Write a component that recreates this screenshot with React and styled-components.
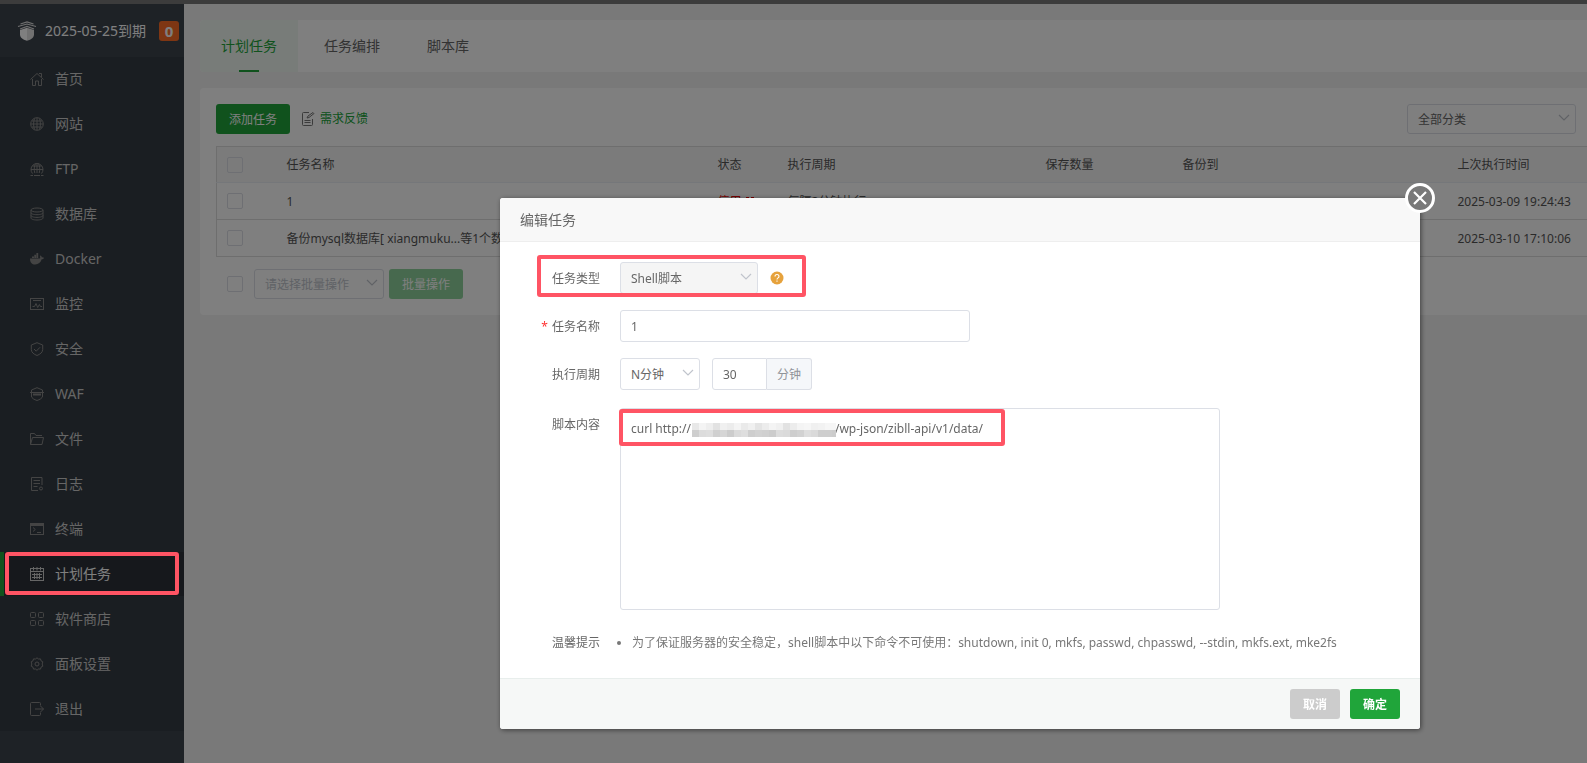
import styled, { createGlobalStyle, css } from "styled-components";

const GlobalStyle = createGlobalStyle`
  * {
    box-sizing: border-box;
  }

  body {
    margin: 0;
    background-color: #f2f2f2;
    color: #666;
    font-family: "Noto Sans", "Noto Sans CJK SC", sans-serif;
    font-size: 12px;
    line-height: 20px;
    overflow: hidden;
  }

  button,
  input,
  select,
  textarea {
    margin: 0;
    font: inherit;
    color: inherit;
  }
`;

const StyledPage = styled.div`
  position: relative;
  display: flex;
  min-height: 100vh;
  border-top: 4px solid #787878;
`;

const StyledSidebar = styled.aside`
  flex: none;
  width: 184px;
  background-color: #3c444d;
`;

const StyledSidebarHeader = styled.header`
  display: flex;
  align-items: center;
  gap: 8px;
  height: 53px;
  padding: 0 5px 0 17px;
  color: #fff;
  font-size: 14px;
  white-space: nowrap;
`;

const StyledExpiry = styled.span`
  flex: 1;
`;

const StyledBadge = styled.span`
  width: 20px;
  border-radius: 3px;
  background-color: #fc6d26;
  font-size: 15px;
  font-weight: bold;
  text-align: center;
`;

const StyledMenu = styled.ul`
  display: flex;
  flex-direction: column;
  gap: 1px;
  margin: 0;
  padding: 0;
  background-color: #353d44;
  list-style: none;
`;

const StyledMenuLink = styled.a`
  display: flex;
  align-items: center;
  gap: 11px;
  height: 44px;
  padding-left: 26px;
  border-left: 4px solid transparent;
  color: #ccc;
  font-size: 14px;
  text-decoration: none;

  svg {
    color: #888;
  }

  ${({ $active }) =>
    $active &&
    css`
      border-left-color: #20a53a;
      background-color: #2c3138;
      color: #fff;

      svg {
        color: #ccc;
      }
    `}
`;

const StyledContent = styled.main`
  flex: 1;
  min-width: 0;
  padding: 16px 0 0 16px;
`;

const StyledTabs = styled.nav`
  display: flex;
  gap: 5px;
  height: 52px;
  margin-bottom: 16px;
  border-radius: 4px 0 0 4px;
  background-color: #fff;
`;

const StyledTab = styled.a`
  display: flex;
  flex-direction: column;
  align-items: center;
  padding: 16px 21px 0;
  border-radius: 4px 0 0 4px;
  background-color: ${({ $active }) => ($active ? "#f0f9f2" : "transparent")};
  color: ${({ $active }) => ($active ? "#20a53a" : "#666")};
  font-size: 14px;
  text-decoration: none;

  &::after {
    content: "";
    width: 20px;
    height: 2px;
    margin-top: auto;
    background-color: ${({ $active }) => ($active ? "#20a53a" : "transparent")};
  }
`;

const StyledPanel = styled.section`
  padding: 16px 0 16px 16px;
  border-radius: 4px 0 0 4px;
  background-color: #fff;
  overflow: hidden;
`;

const StyledToolbar = styled.div`
  display: flex;
  align-items: center;
  gap: 12px;
  margin-bottom: 12px;
  padding-right: 11px;
`;

const StyledButton = styled.button`
  min-width: 50px;
  height: 30px;
  padding: 2px 12px 0;
  border: 0;
  border-radius: 3px;
  background-color: ${({ $muted }) => ($muted ? "#ccc" : "#20a53a")};
  color: #fff;
  font-weight: ${({ $bold }) => ($bold ? "bold" : "normal")};

  &:disabled {
    background-color: #8fd29c;
  }
`;

const StyledTaskButton = styled(StyledButton)`
  min-width: 74px;
`;

const StyledFeedbackLink = styled.a`
  display: flex;
  flex: 1;
  align-items: center;
  gap: 5px;
  color: #20a53a;
  line-height: 22px;
  text-decoration: none;

  svg {
    color: #777;
  }
`;

const StyledSelectBox = styled.div`
  position: relative;
  width: ${({ $width }) => $width}px;

  svg {
    position: absolute;
    top: 50%;
    right: 6px;
    margin-top: -7px;
    color: #c0c4cc;
    pointer-events: none;
  }
`;

const StyledSelect = styled.select`
  display: block;
  width: 100%;
  height: ${({ $tall }) => ($tall ? 32 : 30)}px;
  padding: 2px 10px 0;
  border: 1px solid #dcdfe6;
  border-radius: 3px;
  background-color: ${({ $filled }) => ($filled ? "#f5f5f5" : "#fff")};
  appearance: none;
  color: ${({ $faded }) => ($faded ? "#c0c4cc" : "#666")};
  opacity: 1;
`;

const StyledTable = styled.table`
  width: 1480px;
  border: 1px solid #ddd;
  border-collapse: collapse;
  table-layout: fixed;
  color: #555;

  th,
  td {
    height: 37px;
    padding: 0 10px;
    border-bottom: 1px solid #ddd;
    font-weight: normal;
    text-align: left;
    white-space: nowrap;
  }

  td:not(:first-child) {
    padding-top: 2px;
  }

  th {
    height: 36px;
    border-bottom-color: #ebeef5;
    background-color: #f6f6f6;
  }
`;

const StyledCheckbox = styled.input`
  display: block;
  flex: none;
  width: 16px;
  height: 16px;
  border: 1px solid #dcdfe6;
  border-radius: 2px;
  appearance: none;
`;

const StyledStatus = styled.span`
  display: flex;
  align-items: center;
  gap: 4px;
  color: #e00;
`;

const StyledBatchBar = styled.div`
  display: flex;
  align-items: center;
  gap: 5px;
  margin-top: 12px;
  padding-left: 11px;

  ${StyledCheckbox} {
    margin-right: 6px;
  }
`;

const StyledOverlay = styled.div`
  position: fixed;
  inset: 0;
  display: flex;
  align-items: flex-start;
  padding: 198px 0 0 500px;
  background-color: rgba(0, 0, 0, 0.5);
`;

const StyledDialog = styled.section`
  position: relative;
  flex: none;
  width: 920px;
  border-radius: 3px;
  background-color: #fff;
  box-shadow: 1px 1px 5px rgba(0, 0, 0, 0.5);
`;

const StyledDialogHeader = styled.header`
  height: 44px;
  padding: 12px 20px;
  border-bottom: 1px solid #eee;
  border-radius: 3px 3px 0 0;
  background-color: #f8f8f8;
`;

const StyledDialogTitle = styled.h2`
  margin: 0;
  font-size: 14px;
  font-weight: normal;
  line-height: 20px;
`;

const StyledCloseButton = styled.button`
  position: absolute;
  top: -15px;
  right: -15px;
  display: flex;
  align-items: center;
  justify-content: center;
  width: 30px;
  height: 30px;
  padding: 0;
  border: 3px solid #fff;
  border-radius: 50%;
  background-color: #797979;
  color: #fff;
`;

const StyledForm = styled.form`
  display: flex;
  flex-direction: column;
  gap: 14px;
  padding: 20px 20px 18px;
`;

const StyledRow = styled.div`
  position: relative;
  display: flex;
  align-items: flex-start;
  margin-top: ${({ $spaced }) => ($spaced ? 2 : 0)}px;
`;

const StyledLabel = styled.label`
  flex: none;
  width: 100px;
  padding-right: 20px;
  line-height: 34px;
  text-align: right;
`;

const StyledRequired = styled.span`
  margin-right: 4px;
  color: #f33;
`;

const StyledField = styled.div`
  display: flex;
  align-items: center;
  gap: 12px;
`;

const StyledInput = styled.input`
  width: ${({ $width }) => $width}px;
  height: 32px;
  padding: 0 10px;
  border: 1px solid #dcdfe6;
  border-radius: 3px;
  background-color: #fff;
`;

const StyledInputGroup = styled.div`
  display: flex;

  ${StyledInput} {
    border-radius: 3px 0 0 3px;
  }
`;

const StyledUnit = styled.span`
  width: 45px;
  height: 32px;
  border: 1px solid #dcdfe6;
  border-left: 0;
  border-radius: 0 3px 3px 0;
  background-color: #f5f7fa;
  color: #909399;
  line-height: 32px;
  text-align: center;
`;

const StyledTextarea = styled.textarea`
  display: block;
  width: 600px;
  height: 202px;
  padding: 10px;
  border: 1px solid #dcdfe6;
  border-radius: 3px;
  resize: none;
`;

const StyledMosaic = styled.svg`
  position: absolute;
  top: 15px;
  left: 172px;
`;

const StyledTips = styled.ul`
  margin: 0;
  padding-left: 12px;
  color: #777;
  line-height: 34px;
`;

const StyledDialogFooter = styled.footer`
  display: flex;
  justify-content: flex-end;
  gap: 10px;
  padding: 10px 20px;
  border-top: 1px solid #e8eeec;
  border-radius: 0 0 3px 3px;
  background-color: #f6f8f7;
`;

// red marker frames drawn over the page
const StyledMarker = styled.div`
  position: absolute;
  top: ${({ $top }) => $top}px;
  left: ${({ $left }) => $left}px;
  width: ${({ $width }) => $width}px;
  height: ${({ $height }) => $height}px;
  border: 4px solid #ff5464;
  border-radius: 3px;
  pointer-events: none;
`;

const icons = {
  home: <path d="M.5 7.500 7 1.500l6.500 6M2.500 7v6.500h3V9h3v4.500h3V7M9 1.500h2.500V5" />,
  site: (
    <>
      <circle cx="7" cy="7" r="6.300" />
      <path d="M7 1v12M1 7h12M2 4h10M2 10h10M4.500 1.500C3.300 5 3.300 9 4.500 12.500M9.500 1.500c1.200 3.500 1.200 7.500 0 11" />
    </>
  ),
  ftp: (
    <>
      <path d="M2.500 11.500a6 6 0 1 1 9 0" />
      <path d="M7 1v10M1 7.500h12M2.500 4h9M4.800 11C3.800 7.500 4.200 4 5.500 1.500M9.200 11c1-3.500.6-7-.7-9.500M.5 13.500H3M4 13.500h6M11 13.500h2.500" />
    </>
  ),
  database: (
    <>
      <ellipse cx="7" cy="3" rx="6" ry="2" />
      <path d="M1 3v8c0 1.200 2.700 2 6 2s6-.8 6-2V3M1 5.700c0 1.200 2.700 2 6 2s6-.8 6-2M1 8.400c0 1.200 2.700 2 6 2s6-.8 6-2" />
    </>
  ),
  docker: (
    <path
      fill="currentColor"
      stroke="none"
      d="M2 4.500h2V6H2zM4.300 2.800h1.800V6H4.300zM6.400 1h1.800v5H6.400zM0 6.400h10c.3-.8.200-1.700-.2-2.300l.8-.7c.7.400 1.100 1 1.200 1.800.8-.1 1.600.100 2.200.6-.4 1-1.200 1.500-2.300 1.500-1 3.300-3.300 5.200-6.500 5.200C2 12.500 0 10.500 0 6.400z"
    />
  ),
  monitor: (
    <>
      <rect x="0.5" y="1.500" width="13" height="11" />
      <path d="M3 3.500h8M2.500 9.500h2L6 6.500l1.700 4 1.700-3 1 2h1.600" />
    </>
  ),
  shield: <path d="M7 .7 12.700 3v4.500c0 3-2.700 4.800-5.700 6-3-1.200-5.700-3-5.700-6V3zM4 7l2.200 2.200L10 5.300" />,
  waf: (
    <>
      <path d="M1.500 5V3L7 .7 12.500 3v2M1.300 9c.5 2.500 3 3.500 5.700 4.500 2.700-1 5.200-2 5.700-4.500M0 5.500h14M1.500 5v4M12.500 5v4" />
      <path d="M3 7.500h8" strokeWidth="2" />
    </>
  ),
  folder: <path d="M.5 12.500V1.500h4l1.500 2h6M.5 12.500h11.500l1.500-7h-11L.5 12.500" />,
  log: (
    <>
      <path d="M12 8V.5H1.500v13H8M3.500 3.500H10M3.500 6.500H10M3.500 9.500h4" />
      <circle cx="11" cy="11.500" r="1.500" />
    </>
  ),
  terminal: (
    <>
      <rect x="0.5" y="1.500" width="13" height="11" />
      <path d="M.5 3h13" strokeWidth="2" />
      <path d="m3 5.500 2.300 2L3 9.500M7 10.500h4" />
    </>
  ),
  calendar: (
    <>
      <rect x="0.5" y="1.500" width="13" height="12" />
      <path d="M0 4.500h14M3.500 0v3.500M7 0v3.500M10.500 0v3.500M2 7.500h10M2 10.500h10M4.500 6v6M7 6v6M9.500 6v6" />
    </>
  ),
  store: (
    <>
      <rect x="0.500" y="0.500" width="5" height="5" rx="1" />
      <rect x="8.500" y="0.500" width="5" height="5" rx="1" />
      <rect x="0.500" y="8.500" width="5" height="5" rx="1" />
      <rect x="8.500" y="8.500" width="5" height="5" rx="1" />
    </>
  ),
  settings: (
    <>
      <path d="m5.500 2 1.500-1.200L8.500 2l2-.1.500 1.900 1.800 1-.6 2.200.6 2.200-1.800 1-.5 1.900-2-.1L7 13.200 5.500 12l-2 .1-.5-1.900-1.800-1L1.800 7l-.6-2.200 1.800-1 .5-1.900z" />
      <circle cx="7" cy="7" r="2" />
    </>
  ),
  exit: <path d="M10.500 3.500v-2q0-1-1-1H1.500q-1 0-1 1v11q0 1 1 1h8q1 0 1-1v-2M5 7h8.500M10.500 4 13.500 7l-3 3" />,
};

const menuItems = [
  { icon: "home", name: "首页" },
  { icon: "site", name: "网站" },
  { icon: "ftp", name: "FTP" },
  { icon: "database", name: "数据库" },
  { icon: "docker", name: "Docker" },
  { icon: "monitor", name: "监控" },
  { icon: "shield", name: "安全" },
  { icon: "waf", name: "WAF" },
  { icon: "folder", name: "文件" },
  { icon: "log", name: "日志" },
  { icon: "terminal", name: "终端" },
  { icon: "calendar", name: "计划任务", active: true },
  { icon: "store", name: "软件商店" },
  { icon: "settings", name: "面板设置" },
  { icon: "exit", name: "退出" },
];

const tasks = [
  { name: "1", period: "每隔2分钟执行", last: "2025-03-09 19:24:43" },
  {
    name: "备份mysql数据库[ xiangmuku...等1个数据库 ]",
    period: "每天执行",
    last: "2025-03-10 17:10:06",
  },
];

function MenuIcon({ name }) {
  return (
    <svg width="14" height="14" viewBox="0 0 14 14" fill="none" stroke="currentColor">
      {icons[name]}
    </svg>
  );
}

function Logo() {
  return (
    <svg width="20" height="20" viewBox="0 0 20 20">
      <path
        d="M3.500 3 10 1l6.500 2M1 5.500 10 3l9 2.500M3 8l7-2.500L17 8"
        fill="none"
        stroke="#ddd"
        strokeWidth="1.200"
      />
      <path d="M3 9l7-2.300v13.100C5.500 18.500 3 16.500 3 13.500z" fill="#fff" />
      <path d="M17 9l-7-2.300v13.100c4.500-1.300 7-3.300 7-6.300z" fill="#e2e2e2" />
    </svg>
  );
}

function Select({ id, label, width, children, ...props }) {
  return (
    <StyledSelectBox $width={width}>
      <StyledSelect id={id} aria-label={label} {...props}>
        <option>{children}</option>
      </StyledSelect>
      <svg width="12" height="12" viewBox="0 0 12 12" fill="none" stroke="currentColor">
        <path d="m1 3 5 5 5-5" strokeWidth="1.200" />
      </svg>
    </StyledSelectBox>
  );
}

// pixelated strip that hides the host name
function Mosaic() {
  const top = [232, 244, 238, 226, 240, 236, 244, 234, 240, 228, 236, 244, 240, 226, 236, 244, 246, 240, 242, 246, 246];
  const bottom = [206, 220, 222, 208, 214, 204, 218, 222, 206, 210, 208, 204, 220, 218, 206, 210, 222, 218, 206, 206, 204];

  return (
    <StyledMosaic width="144" height="14" aria-hidden="true">
      {top.map((v, i) => (
        <rect key={i} x={i * 7} width="7" height="7" fill={`rgb(${v},${v},${v})`} />
      ))}
      {bottom.map((v, i) => (
        <rect key={i} x={i * 7} y="7" width="7" height="7" fill={`rgb(${v},${v},${v})`} />
      ))}
    </StyledMosaic>
  );
}

function Sidebar() {
  return (
    <StyledSidebar>
      <StyledSidebarHeader>
        <Logo />
        <StyledExpiry>2025-05-25到期</StyledExpiry>
        <StyledBadge>0</StyledBadge>
      </StyledSidebarHeader>
      <StyledMenu>
        {menuItems.map((item) => (
          <li key={item.name}>
            <StyledMenuLink href="#" $active={item.active}>
              <MenuIcon name={item.icon} />
              {item.name}
            </StyledMenuLink>
          </li>
        ))}
      </StyledMenu>
    </StyledSidebar>
  );
}

function TaskTable() {
  return (
    <StyledTable>
      <colgroup>
        <col style={{ width: 60 }} />
        <col style={{ width: 431 }} />
        <col style={{ width: 70 }} />
        <col style={{ width: 258 }} />
        <col style={{ width: 137 }} />
        <col style={{ width: 275 }} />
        <col />
      </colgroup>
      <thead>
        <tr>
          <th>
            <StyledCheckbox type="checkbox" aria-label="全选" />
          </th>
          <th>任务名称</th>
          <th>状态</th>
          <th>执行周期</th>
          <th>保存数量</th>
          <th>备份到</th>
          <th>上次执行时间</th>
        </tr>
      </thead>
      <tbody>
        {tasks.map((task) => (
          <tr key={task.name}>
            <td>
              <StyledCheckbox type="checkbox" aria-label={task.name} />
            </td>
            <td>{task.name}</td>
            <td>
              <StyledStatus>
                停用
                <svg width="8" height="10" viewBox="0 0 8 10" fill="currentColor">
                  <path d="M0 0h3v10H0zM5 0h3v10H5z" />
                </svg>
              </StyledStatus>
            </td>
            <td>{task.period}</td>
            <td />
            <td />
            <td>{task.last}</td>
          </tr>
        ))}
      </tbody>
    </StyledTable>
  );
}

function EditDialog() {
  return (
    <StyledDialog role="dialog" aria-labelledby="dialog-title">
      <StyledDialogHeader>
        <StyledDialogTitle id="dialog-title">编辑任务</StyledDialogTitle>
      </StyledDialogHeader>
      <StyledCloseButton type="button" aria-label="关闭">
        <svg width="14" height="14" viewBox="0 0 14 14" stroke="currentColor" strokeWidth="2.200">
          <path d="m1 1 12 12M13 1 1 13" />
        </svg>
      </StyledCloseButton>
      <StyledForm>
        <StyledRow>
          <StyledLabel htmlFor="task-type">任务类型</StyledLabel>
          <StyledField>
            <Select id="task-type" width={138} $tall $filled>
              Shell脚本
            </Select>
            <svg width="14" height="14" viewBox="0 0 14 14" aria-hidden="true">
              <circle cx="7" cy="7" r="6.500" fill="#e6a23c" />
              <path
                d="M5 5.500c0-2.600 4-2.600 4 0C9 7 7 6.800 7 8.500M7 9.500v1.200"
                fill="none"
                stroke="#fff"
                strokeWidth="1.100"
              />
            </svg>
          </StyledField>
          <StyledMarker $top={-7} $left={17} $width={269} $height={42} />
        </StyledRow>
        <StyledRow>
          <StyledLabel htmlFor="task-name">
            <StyledRequired>*</StyledRequired>
            任务名称
          </StyledLabel>
          <StyledInput id="task-name" $width={350} defaultValue="1" />
        </StyledRow>
        <StyledRow>
          <StyledLabel htmlFor="task-period">执行周期</StyledLabel>
          <StyledField>
            <Select id="task-period" width={80} $tall>
              N分钟
            </Select>
            <StyledInputGroup>
              <StyledInput $width={55} defaultValue="30" aria-label="分钟" />
              <StyledUnit>分钟</StyledUnit>
            </StyledInputGroup>
          </StyledField>
        </StyledRow>
        <StyledRow $spaced>
          <StyledLabel htmlFor="task-script">脚本内容</StyledLabel>
          <StyledTextarea
            id="task-script"
            defaultValue={"curl http://" + "\u2003".repeat(12) + "/wp-json/zibll-api/v1/data/"}
          />
          <Mosaic />
          <StyledMarker $top={1} $left={99} $width={386} $height={37} />
        </StyledRow>
        <StyledRow $spaced>
          <StyledLabel as="span">温馨提示</StyledLabel>
          <StyledTips>
            <li>
              为了保证服务器的安全稳定，shell脚本中以下命令不可使用：shutdown, init 0, mkfs, passwd, chpasswd, --stdin,
              mkfs.ext, mke2fs
            </li>
          </StyledTips>
        </StyledRow>
      </StyledForm>
      <StyledDialogFooter>
        <StyledButton type="button" $muted $bold>
          取消
        </StyledButton>
        <StyledButton type="button" $bold>
          确定
        </StyledButton>
      </StyledDialogFooter>
    </StyledDialog>
  );
}

export default function App() {
  return (
    <>
      <GlobalStyle />
      <StyledPage>
        <Sidebar />
        <StyledContent>
          <StyledTabs>
            <StyledTab href="#" $active>
              计划任务
            </StyledTab>
            <StyledTab href="#">任务编排</StyledTab>
            <StyledTab href="#">脚本库</StyledTab>
          </StyledTabs>
          <StyledPanel>
            <StyledToolbar>
              <StyledTaskButton type="button">添加任务</StyledTaskButton>
              <StyledFeedbackLink href="#">
                <svg width="13" height="14" viewBox="0 0 13 14" fill="none" stroke="currentColor">
                  <path d="M7 .5H1.500q-1 0-1 1v11q0 1 1 1h8q1 0 1-1V7M2.500 8.500h6M2.500 10.500h6M5 6l1-2 5-3.500 1 1L7 5.500z" />
                </svg>
                需求反馈
              </StyledFeedbackLink>
              <Select label="分类" width={169}>
                全部分类
              </Select>
            </StyledToolbar>
            <TaskTable />
            <StyledBatchBar>
              <StyledCheckbox type="checkbox" aria-label="全选" />
              <Select label="批量操作" width={130} $faded disabled>
                请选择批量操作
              </Select>
              <StyledTaskButton type="button" disabled>
                批量操作
              </StyledTaskButton>
            </StyledBatchBar>
          </StyledPanel>
        </StyledContent>
      </StyledPage>
      <StyledOverlay>
        <EditDialog />
        <StyledMarker $top={552} $left={5} $width={174} $height={43} />
      </StyledOverlay>
    </>
  );
}
